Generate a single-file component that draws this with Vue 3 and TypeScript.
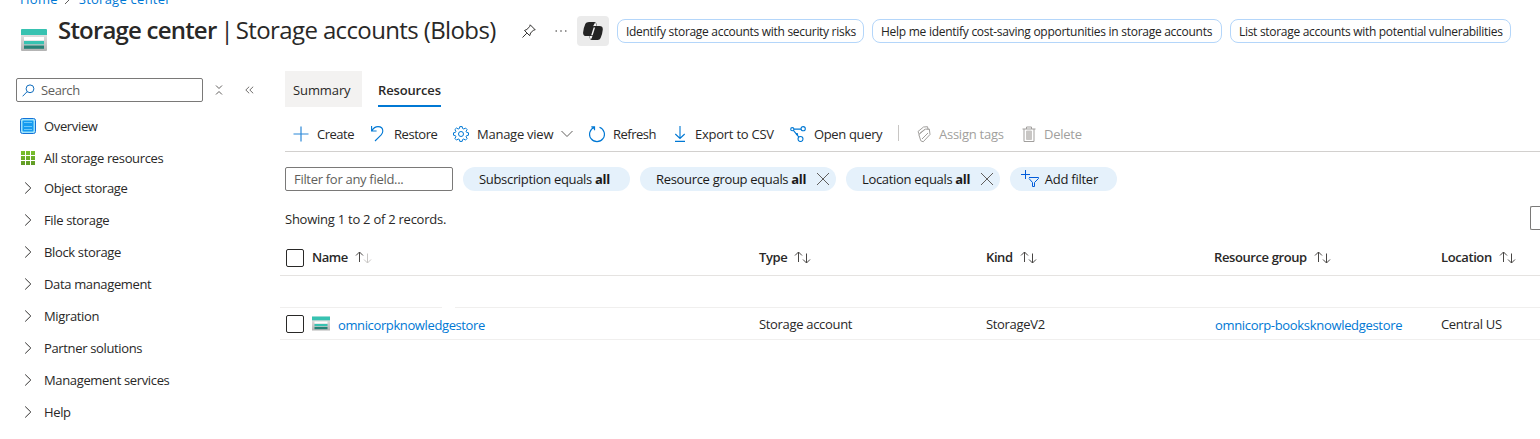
<script setup lang="ts">
import { ref } from 'vue'

interface Column { key: string; label: string; dim: boolean }

const suggestions = [
  'Identify storage accounts with security risks',
  'Help me identify cost-saving opportunities in storage accounts',
  'List storage accounts with potential vulnerabilities',
]
const groups = ['Object storage', 'File storage', 'Block storage', 'Data management', 'Migration', 'Partner solutions', 'Management services', 'Help']
const columns: Column[] = [
  { key: 'name', label: 'Name', dim: true },
  { key: 'type', label: 'Type', dim: false },
  { key: 'kind', label: 'Kind', dim: false },
  { key: 'group', label: 'Resource group', dim: false },
  { key: 'location', label: 'Location', dim: false },
]
const filters = [
  { key: 'subscription', field: 'Subscription', removable: false },
  { key: 'resource', field: 'Resource group', removable: true },
  { key: 'place', field: 'Location', removable: true },
]
const activeTab = ref('Resources')
</script>

<template>
  <div class="page">
    <nav class="crumbs">
      <a>Home</a>
      <svg width="6" height="10" viewBox="0 0 6 10"><path d="M1 1l4 4-4 4" fill="none" stroke="#605e5c" /></svg>
      <a>Storage center</a>
    </nav>

    <header class="title-bar">
      <svg class="store-icon" width="28" height="24" viewBox="0 0 28 24">
        <defs><linearGradient id="steel" x1="0" y1="0" x2="0" y2="1"><stop offset="0" stop-color="#f0f0f0" /><stop offset="1" stop-color="#b3b3b3" /></linearGradient></defs>
        <rect x="1" y="1" width="26" height="22" rx="1" fill="url(#steel)" />
        <path d="M1 7V2q0-1 1-1h24q1 0 1 1v5z" fill="#37c2b1" />
        <path d="M4 9h20v3.500H4z" fill="#fff" /><path d="M4 13h20v3.300H4z" fill="#37c2b1" /><path d="M4 17.500h20v3.300H4z" fill="#258277" />
      </svg>
      <h1><b>Storage center</b><span class="bar"> | </span><span>Storage accounts (Blobs)</span></h1>
      <svg class="pin" width="16" height="16" viewBox="0 0 16 16" fill="none" stroke="#323130" stroke-width="1"><path d="M1.500 14.500l4.300-4.300M3.500 7.500l5.200 5.200.9-2.700 2.900-2.900 1.700-.3-5-5-.4 1.700-2.900 2.900z" /></svg>
      <svg class="dots" width="12" height="4" viewBox="0 0 12 4" fill="#484644"><circle cx="1.200" cy="2" r=".8" /><circle cx="6" cy="2" r=".8" /><circle cx="10.800" cy="2" r=".8" /></svg>
      <span class="copilot">
        <svg width="20" height="20" viewBox="0 0 20 20">
          <path d="M6 1h5.300q1.500 0 2 1.500L14 5h2.500q3.500 0 3.300 3.500-.3 4-2.200 8.600-.8 1.900-2.800 1.900H9q-1.600 0-2.100-1.600L6.200 15H3.200Q-.1 15 .1 11.500.4 7 2.400 2.700 3.200 1 6 1z" fill="#242424" />
          <path d="M12 1.800q.8.300 1.100 1.300l.6 1.900h-3q-.6 0-.9.700z" fill="#f5f5f5" />
          <path d="M10.600 6.500h1.500L9.700 14.300H8.200z" fill="#f5f5f5" />
          <path d="M6.400 15h3q-.4 2.600-1.600 3.200-.5-.3-.7-1z" fill="#f5f5f5" />
        </svg>
      </span>
      <button v-for="s in suggestions" :key="s" class="suggestion"><span>{{ s }}</span></button>
    </header>

    <div class="body">
      <aside>
        <div class="search-row">
          <div class="search">
            <svg width="13" height="13" viewBox="0 0 13 13" fill="none" stroke="#0f6cbd" stroke-width="1"><circle cx="8" cy="4.800" r="3.900" /><path d="M5.200 7.600L.6 12.300" /></svg>
            <span>Search</span>
          </div>
          <svg class="collapse" width="8" height="10" viewBox="0 0 8 10" fill="none" stroke="#605e5c"><path d="M1 .5l3 3 3-3M1 9.500l3-3 3 3" /></svg>
          <svg class="hide" width="9" height="8" viewBox="0 0 9 8" fill="none" stroke="#605e5c" stroke-width=".9"><path d="M4.200.7L.8 4l3.400 3.300M8.200.7L4.800 4l3.400 3.300" /></svg>
        </div>
        <ul class="menu">
          <li>
            <svg width="16" height="16" viewBox="0 0 16 16"><rect x=".5" y=".5" width="15" height="15" rx="2" fill="#9fe3fa" stroke="#1372d8" /><rect x="2.500" y="2.500" width="11" height="11" rx="1" fill="#159bf0" /><path d="M4 4.500h8M4 8.500h8M4 11.500h8" stroke="#6cc8fb" /></svg>
            <span>Overview</span>
          </li>
          <li>
            <svg width="16" height="16" viewBox="0 0 16 16"><defs><linearGradient id="leaf" x1="0" y1="0" x2="0" y2="16" gradientUnits="userSpaceOnUse"><stop stop-color="#7cc42f" /><stop offset="1" stop-color="#5e9624" /></linearGradient></defs><path d="M1 1h4v4H1zM6 1h4v4H6zM11 1h4v4h-4zM1 6h4v4H1zM6 6h4v4H6zM11 6h4v4h-4zM1 11h4v4H1zM6 11h4v4H6zM11 11h4v4h-4z" fill="url(#leaf)" /></svg>
            <span>All storage resources</span>
          </li>
        </ul>
        <ul class="menu groups">
          <li v-for="g in groups" :key="g">
            <svg width="16" height="16" viewBox="0 0 16 16" fill="none" stroke="#323130"><path d="M5.200 2.500l5.600 5.500-5.600 5.500" /></svg>
            <span>{{ g }}</span>
          </li>
        </ul>
      </aside>

      <main>
        <div class="tabs">
          <button :class="{ active: activeTab === 'Summary' }" class="summary" @click="activeTab = 'Summary'">Summary</button>
          <button :class="{ active: activeTab === 'Resources' }" @click="activeTab = 'Resources'">Resources</button>
        </div>

        <div class="toolbar">
          <button class="create"><svg width="16" height="16" viewBox="0 0 16 16"><path d="M8 .5v15M.5 8h15" fill="none" stroke="#2b88d8" stroke-width="1.200" /></svg><span>Create</span></button>
          <button class="restore"><svg width="16" height="18" viewBox="0 0 16 18" fill="none" stroke="#0078d4" stroke-width="1.100"><path d="M1.600 1v5h5M1.800 5.800C3.300 3.200 5.500 1.600 8 1.600c3 0 4.800 2 4.800 4.400 0 1.500-.5 2.700-1.600 3.800L5 16" /></svg><span>Restore</span></button>
          <button class="manage">
            <svg width="16" height="16" viewBox="0 0 16 16" fill="none" stroke="#0078d4"><path d="M6.800.6h2.400l.4 1.900 1.200.5L12.500 2l1.600 1.600-1 1.700.5 1.100 1.900.4v2.400l-1.900.4-.5 1.200 1 1.600-1.600 1.700-1.700-1.100-1.200.5-.4 1.900H6.800l-.4-1.900-1.200-.5-1.700 1.100-1.600-1.700 1-1.600-.5-1.200-1.900-.4V6.800l1.900-.4.5-1.100-1-1.700L3.500 2l1.700 1 1.200-.5z" /><circle cx="8" cy="8" r="2.500" /></svg>
            <span>Manage view</span>
            <svg class="caret" width="12" height="8" viewBox="0 0 12 8"><path d="M.5 1L6 6.500 11.500 1" fill="none" stroke="#605e5c" /></svg>
          </button>
          <button class="refresh"><svg width="16" height="17" viewBox="0 0 16 17" fill="none" stroke="#0078d4" stroke-width="1.200"><path d="M2.300.8h3.200v3.400M5.500 1.300A7.400 7.400 0 1 0 10.500 1.300" /></svg><span>Refresh</span></button>
          <button class="export"><svg width="12" height="16" viewBox="0 0 12 16" fill="none" stroke="#0078d4" stroke-width="1.100"><path d="M6 0v12.500M1.300 8L6 12.500 10.700 8M1 15.400h10" /></svg><span>Export to CSV</span></button>
          <button class="query"><svg width="16" height="16" viewBox="0 0 16 16" fill="none" stroke="#0078d4" stroke-width="1.100"><circle cx="2.300" cy="3.200" r="1.600" /><circle cx="13.200" cy="2.700" r="2.100" /><circle cx="10.500" cy="13" r="2.500" /><circle cx="7" cy="8.200" r=".6" /><path d="M4 3.100h7M3.400 4.400l5.500 6.700" /></svg><span>Open query</span></button>
          <i class="divider" />
          <button class="assign off"><svg width="14" height="17" viewBox="0 0 14 17" fill="none" stroke="#a19f9d"><path d="M1 5.500L6.500 1l4-.3.7 3.300M1 5.500l1.300 3M1.800 8.500l6.500-5.300 4-.2.700 5.500-6.800 7.300-2.400-1zM3 7.200L7.800 3.300M5 13l6-6" /></svg><span>Assign tags</span></button>
          <button class="delete off"><svg width="14" height="17" viewBox="0 0 14 17" fill="none" stroke="#a19f9d"><path d="M.5 3h13M4.500 3V1h5v2M2 3v12.500h10V3" /><path d="M4.500 5h5v8.500h-5z" fill="#c8c6c4" stroke="#c8c6c4" /></svg><span>Delete</span></button>
        </div>

        <div class="filters">
          <div class="filter-input"><span>Filter for any field...</span></div>
          <div v-for="f in filters" :key="f.key" class="pill" :class="f.key">
            <span>{{ f.field }} equals <b>all</b></span>
            <svg v-if="f.removable" width="14" height="14" viewBox="0 0 14 14"><path d="M1 1l12 12M13 1L1 13" fill="none" stroke="#605e5c" /></svg>
          </div>
          <div class="pill add">
            <svg width="18" height="18" viewBox="0 0 18 18" fill="none" stroke="#015cda" stroke-width="1"><path d="M4.500 0v9M0 4.500h9M8 7.500h9.500v1L13.500 12.500v4h-2v-4L8 8.500" /></svg>
            <span>Add filter</span>
          </div>
        </div>

        <div class="status"><span>Showing 1 to 2 of 2 records.</span><i class="select-edge" /></div>

        <div class="table">
          <div class="row head">
            <i class="check" />
            <div v-for="c in columns" :key="c.key" class="cell" :class="c.key">
              <span>{{ c.label }}</span>
              <svg width="17" height="13" viewBox="0 0 17 13" fill="none" stroke="#484644"><path d="M4.500 11V1M1 4.500L4.500 1 8 4.500" /><path :class="{ dim: c.dim }" d="M12.500 2.500v9.500M9 8.500l3.500 3.500L16 8.500" /></svg>
            </div>
          </div>
          <div class="row blank"><i class="line" /><i class="line" /></div>
          <div class="row">
            <i class="check" />
            <div class="cell name">
              <svg width="18" height="15" viewBox="0 0 18 15"><rect y=".5" width="18" height="14" fill="url(#steel)" /><path d="M0 .5h18v3.800H0z" fill="#37c2b1" /><path d="M2.500 5.500h13v2h-13z" fill="#fff" /><path d="M2.500 8h13v2.200h-13z" fill="#37c2b1" /><path d="M2.500 11h13v2.200h-13z" fill="#258277" /></svg>
              <a>omnicorpknowledgestore</a>
            </div>
            <div class="cell type"><span>Storage account</span></div>
            <div class="cell kind"><span>StorageV2</span></div>
            <div class="cell group"><a>omnicorp-booksknowledgestore</a></div>
            <div class="cell location"><span>Central US</span></div>
          </div>
        </div>
      </main>
    </div>
  </div>
</template>

<style>
body { margin: 0; background: #fff; }
</style>

<style scoped>
.page { width: 1540px; height: 439px; overflow: hidden; background: #fff; color: #292827; font: 13px/18px "Segoe UI", "Open Sans", "Noto Sans", sans-serif; letter-spacing: -0.25px; white-space: nowrap; }
.page * { box-sizing: border-box; }
svg { display: block; flex: none; }
button { border: 0; background: none; padding: 0; font: inherit; letter-spacing: inherit; color: inherit; }
a { color: #0078d4; }
ul { list-style: none; margin: 0; padding: 0; }
b { font-weight: 700; }

.crumbs { height: 8px; padding-left: 20px; display: flex; align-items: flex-end; letter-spacing: 0.25px; }
.crumbs svg { margin: 0 9px 3px 6px; }

.title-bar { height: 63px; display: flex; align-items: flex-start; padding-left: 20px; }
.store-icon { margin-top: 20px; }
h1 { width: 439px; margin: 6px 0 0 10px; font-size: 24px; line-height: 32px; font-weight: 400; letter-spacing: -0.62px; white-space: pre; }
h1 b { font-weight: 600; letter-spacing: -0.8px; }
h1 .bar { letter-spacing: -2.1px; }
.pin { margin: 15px 0 0 24px; }
.dots { margin: 21px 0 0 18px; }
.copilot { width: 32px; height: 30px; margin: 8px 8px 0 10px; border-radius: 4px; background: #ebebeb; display: grid; place-items: center; }
.suggestion { width: 247px; height: 24px; flex: none; margin: 11px 8px 0 0; padding: 1px 0 0 8px; border: 1px solid #b4d6fa; border-radius: 8px; font-size: 12px; line-height: 21px; text-align: left; color: #242424; letter-spacing: -0.3px; }
.suggestion:nth-of-type(2) { width: 350px; letter-spacing: -0.27px; }
.suggestion:nth-of-type(3) { width: 281px; }

.body { display: grid; grid-template-columns: 280px 1260px; }
.search-row { display: flex; align-items: center; height: 24px; margin: 7px 0 8px 16px; }
.search { width: 187px; height: 24px; border: 1px solid #7a7978; border-radius: 2px; display: flex; align-items: center; padding-left: 5px; color: #605e5c; letter-spacing: -0.4px; }
.search span { margin-left: 6px; }
.collapse { margin-left: 12px; }
.hide { margin-left: 22px; }
.menu { letter-spacing: -0.35px; }
.menu li { height: 32px; padding-left: 20px; display: flex; align-items: center; }
.menu span { margin-left: 8px; }
.groups { margin-top: -2px; }

.tabs { display: flex; height: 36px; margin-left: 5px; }
.tabs button { height: 36px; padding-top: 2px; line-height: 34px; text-align: left; }
.tabs .summary { width: 77px; margin-right: 16px; padding-left: 8px; letter-spacing: -0.1px; background: #f3f2f1; }
.tabs .active { width: 63px; font-weight: 600; border-bottom: 2px solid #0078d4; line-height: 32px; padding-top: 3px; letter-spacing: -0.15px; }

.toolbar { height: 45px; margin-left: 5px; padding: 9px 0 0 8px; display: flex; border-bottom: 1px solid #d2d0ce; }
.toolbar button { height: 36px; display: flex; align-items: center; text-align: left; }
.toolbar button span { margin-left: 8px; }
.create { width: 77px; letter-spacing: -0.5px; }
.restore { width: 83px; letter-spacing: -0.45px; }
.manage { width: 136px; }
.manage .caret { margin-left: auto; margin-right: 16px; }
.refresh { width: 85px; letter-spacing: -0.5px; }
.export { width: 116px; }
.toolbar .export span { margin-left: 9px; }
.query { width: 108px; letter-spacing: -0.35px; }
.divider { width: 1px; height: 16px; margin: 9px 18px 0 0; background: #c8c6c4; }
.assign { width: 105px; }
.off { color: #a19f9d; }

.filters { display: flex; height: 24px; margin: 15px 0 0 5px; gap: 10px; }
.filter-input { width: 168px; height: 24px; padding-left: 8px; line-height: 22px; border: 1px solid #7a7978; border-radius: 2px; color: #605e5c; letter-spacing: -0.3px; }
.pill { height: 24px; border-radius: 12px; background: #e5f1fb; padding: 0 6px 0 16px; display: flex; align-items: center; justify-content: space-between; color: #1b1a19; letter-spacing: -0.32px; }
.subscription { width: 167px; }
.resource { width: 196px; }
.place { width: 154px; }
.add { width: 107px; padding: 0 19px 0 11px; letter-spacing: -0.25px; }

.status { height: 42px; margin-left: 5px; padding-top: 19px; display: flex; justify-content: space-between; }
.select-edge { width: 10px; height: 24px; margin-top: -4px; border: 1px solid #7a7978; border-right: 0; border-radius: 2px 0 0 2px; }

.table { margin-top: 7px; }
.row { height: 32px; padding-left: 6px; display: grid; grid-template-columns: 26px 447px 227px 228px 227px 99px; align-items: center; border-bottom: 1px solid #f0efee; }
.row.head { height: 36px; border-color: #e5e3e1; font-weight: 600; }
.check { width: 18px; height: 18px; border: 1px solid #292827; border-radius: 2px; }
.cell { display: flex; align-items: center; letter-spacing: -0.32px; }
.head .cell { padding-bottom: 1px; letter-spacing: -0.4px; }
.head svg { margin-left: 7px; }
.head .name { letter-spacing: -0.5px; }
.dim { stroke: #c8c6c4; }
.cell a { padding-top: 2px; }
.name a { margin-left: 8px; letter-spacing: -0.38px; }
.group a { margin-left: 1px; }
.blank { border: 0; padding: 0; display: flex; align-items: flex-end; gap: 13px; }
.line { height: 1px; width: 162px; background: #f0efee; }
.line + .line { width: 1085px; }
</style>
